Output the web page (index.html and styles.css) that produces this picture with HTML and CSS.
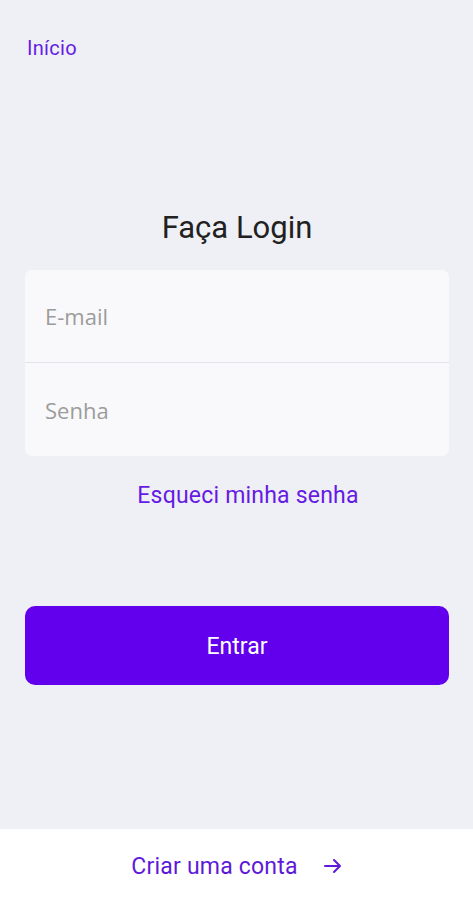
FILE: index.html
```html
<!DOCTYPE html>
<html>
    <head>
        <meta charset="utf-8">
        <title>Faça Login</title>
        <link rel="stylesheet" href="styles.css">
    </head>
    <body>
        <main class="page">
            <a class="home" href="#">Início</a>
            <h1 class="title">Faça Login</h1>
            <form class="card">
                <div class="field"><input type="email" placeholder="E-mail"></div>
                <div class="field"><input type="password" placeholder="Senha"></div>
            </form>
            <a class="forgot" href="#">Esqueci minha senha</a>
            <button class="submit" type="button">Entrar</button>
        </main>
        <footer class="footer">
            <a class="signup" href="#">
                <span>Criar uma conta</span>
                <svg width="18" height="16" viewBox="0 0 18 16"><path d="M1 8H16M10 2L16 8L10 14" fill="none" stroke="currentColor" stroke-width="2" stroke-linecap="round" stroke-linejoin="round"/></svg>
            </a>
        </footer>
    </body>
</html>
```

FILE: styles.css
```css
*{
    margin: 0;
    padding: 0;
    box-sizing: border-box;
}
body{
    height: 900px;
    display: flex;
    flex-direction: column;
    background: #eff0f5;
    font-family: Roboto, "Noto Sans", sans-serif;
}
a{
    text-decoration: none;
    color: #661be4;
}
.page{
    flex: 1;
    display: flex;
    flex-direction: column;
    padding: 36px 24px 0 25px;
}
.home{
    align-self: flex-start;
    font-size: 20px;
    line-height: 24px;
    letter-spacing: 0.3px;
    margin-left: 2px;
}
.title{
    margin-top: 150px;
    text-align: center;
    font-size: 31px;
    line-height: 36px;
    font-weight: 400;
    color: #212121;
}
.card{
    margin-top: 24px;
    background: #f9f9fb;
    border-radius: 7px;
    overflow: hidden;
}
.field{
    height: 93px;
    display: flex;
    align-items: center;
}
.field:first-child{
    border-bottom: 1px solid #e3e3e8;
}
.field input{
    width: 100%;
    border: none;
    outline: none;
    background: transparent;
    padding-left: 20px;
    font-family: "Open Sans", "Noto Sans", sans-serif;
    font-size: 22px;
    color: #333;
}
.field input::placeholder{
    color: #9c9c9c;
}
.forgot{
    margin-top: 27px;
    align-self: center;
    padding-left: 22px;
    font-size: 23px;
    line-height: 26px;
    letter-spacing: 0.2px;
}
.submit{
    margin-top: 97px;
    height: 79px;
    border: none;
    border-radius: 10px;
    background: #6200ee;
    color: #fff;
    font-family: Roboto, sans-serif;
    font-size: 23px;
    padding-top: 2px;
}
.footer{
    height: 71px;
    padding-top: 5px;
    background: #fff;
    display: flex;
    justify-content: center;
    align-items: center;
}
.signup{
    display: flex;
    align-items: center;
    gap: 26px;
    font-size: 23px;
    line-height: 28px;
    letter-spacing: 0.2px;
    color: #5e1ad8;
}
.signup svg{
    margin-top: -2px;
}
```
